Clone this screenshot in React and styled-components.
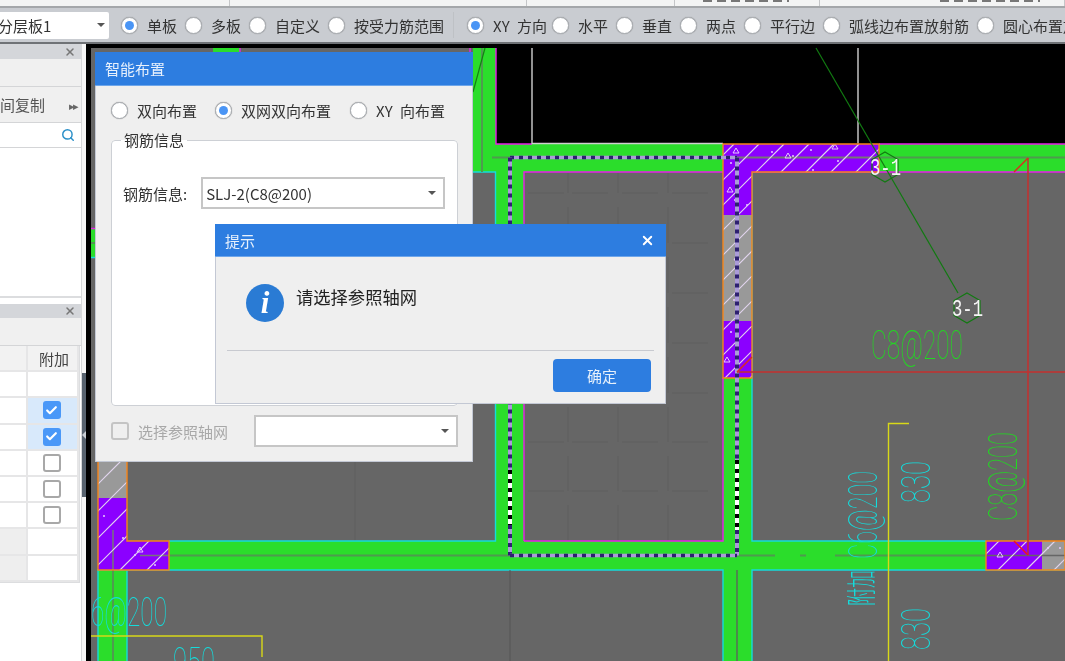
import React from 'react';
import styled, { createGlobalStyle } from 'styled-components';
import { Search, X, Check } from 'lucide-react';

const cjk = '"Noto Sans CJK SC", "Liberation Sans", sans-serif';
const BLUE = '#2d7de0';

const Global = createGlobalStyle`
  html, body { margin: 0; padding: 0; background: #fff; }
  * { box-sizing: border-box; }
`;

const Page = styled.div`
  position: relative; width: 1065px; height: 661px; overflow: hidden;
  display: flex; flex-direction: column;
  font-family: ${cjk}; font-size: 15px; color: #333; background: #fff;
  filter: blur(0.4px);
`;

const Strip = styled.div`
  height: 8px; flex: none; display: flex; background: #f3f4f4;
  border-bottom: 2px solid #a4a7aa;
`;
const StripCell = styled.div`
  width: ${p => p.$w}px; flex: none; overflow: hidden; padding-left: ${p => p.$pad || 0}px;
  border-right: 1px solid #c4c6c8;
`;
const GlyphTrace = styled.div`
  width: ${p => p.$w}px; height: 2px;
  background: repeating-linear-gradient(90deg, #777 0 9px, transparent 9px 14px);
`;

const Toolbar = styled.div`
  height: 36px; flex: none; display: flex; align-items: center; overflow: hidden;
  background: #c9ccd1; border-bottom: 2px solid #6f7276; white-space: nowrap; word-spacing: 4px;
`;
const LayerSelect = styled.div`
  width: 109px; height: 27px; flex: none; margin-right: 12px; background: #fff;
  display: flex; align-items: center; justify-content: space-between;
  padding-right: 4px; font-size: 15px; border-radius: 0 2px 2px 0;
  & > span:first-child { margin-left: -2px; }
`;
const Caret = styled.span`
  width: 0; height: 0; flex: none;
  border-left: 4px solid transparent; border-right: 4px solid transparent; border-top: 4px solid #555;
`;
const RadioItem = styled.label`
  display: inline-flex; align-items: center; gap: 9px; flex: none; margin-right: ${p => p.$gap ?? 8}px;
  color: #333;
`;
const RadioDot = styled.span`
  width: 17px; height: 17px; flex: none; border-radius: 50%; background: #fff;
  border: 1px solid #a9adb2; display: inline-flex; align-items: center; justify-content: center;
  box-shadow: 0 0 1px #888;
  &::after { content: ''; width: 9px; height: 9px; border-radius: 50%; background: ${p => p.$on ? '#4a95f5' : 'transparent'}; }
`;
const ToolSep = styled.span`
  width: 1px; height: 26px; flex: none; background: #bec1c5; margin: 0 13px 0 1px;
`;

const Main = styled.div`flex: 1; min-height: 0; display: flex;`;
const Sidebar = styled.div`
  width: 82px; flex: none; display: flex; flex-direction: column; background: #fff;
  border-right: 1px solid #d6d7d9;
`;
const PanelHeader = styled.div`
  height: ${p => p.$h}px; flex: none; background: #d4d6da; display: flex; align-items: center;
  justify-content: flex-end; padding-right: 5px; color: #777;
`;
const PanelBand = styled.div`
  height: ${p => p.$h}px; flex: none; background: #f0f0f0; border-bottom: 1px solid #d4d5d7;
  display: flex; align-items: center; justify-content: space-between; overflow: hidden; white-space: nowrap;
  padding-right: 2px; color: #555;
`;
const TinyArrows = styled.span`font-size: 11px; letter-spacing: -2px; color: #666; padding-right: 2px;`;
const SearchRow = styled.div`
  height: 25px; flex: none; display: flex; align-items: center; justify-content: flex-end;
  padding-right: 6px; border-bottom: 1px solid #d4d5d7; color: #2a8fc8;
`;
const ListArea = styled.div`
  height: 150px; flex: none; border-bottom: 2px solid #dcdddf; margin-bottom: 6px;
`;
const Table = styled.div`
  display: grid; grid-template-columns: 28px 51px; grid-auto-rows: 26.2px; width: 80px;
  border-right: 1px solid #dcdddf; border-bottom: 1px solid #dcdddf;
`;
const Cell = styled.div`
  display: flex; align-items: center; justify-content: center;
  border-bottom: 2px solid #e6e6e7; border-right: 2px solid #e6e6e7;
  background: ${p => p.$bg || '#fff'}; color: #444;
`;
const HeadCell = styled(Cell)`background: #f2f2f2; padding-left: 3px;`;
const CheckBox = styled.span`
  width: 18px; height: 18px; flex: none; border-radius: 3px; margin-right: 2px;
  display: inline-flex; align-items: center; justify-content: center; color: #fff;
  background: ${p => p.$on ? '#4a98f8' : 'transparent'};
  border: ${p => p.$on ? 'none' : `2px solid ${p.$light ? '#c4c4c4' : '#a8a8a8'}`};
`;

const SplitCol = styled.div`width: 4px; flex: none; background: #f6f6f6; padding-top: 329px;`;
const SplitHandle = styled.div`
  width: 100%; height: 124px; background: #58636f; display: flex; align-items: center; justify-content: center;
  &::after { content: ''; border-right: 4px solid #c9ced4; border-top: 4px solid transparent; border-bottom: 4px solid transparent; }
`;
const Canvas = styled.div`flex: 1; min-width: 0; background: #000; & > svg { display: block; }`;

const Dialog = styled.div`
  position: absolute; left: ${p => p.$x}px; top: ${p => p.$y}px; width: ${p => p.$w}px; height: ${p => p.$h}px;
  background: #efefef; border: 1px solid #c3c8d4; border-top: none;
  display: flex; flex-direction: column;
`;
const TitleBar = styled.div`
  height: ${p => p.$h}px; flex: none; margin: 0 -1px; background: ${BLUE}; color: #e8f1fc;
  display: flex; align-items: center; justify-content: space-between; padding: 0 11px 0 10px;
  border-bottom: 1px solid #6ea6ea;
`;
const SmartBody = styled.div`flex: 1; display: flex; flex-direction: column; padding: 14px 14px 0 15px;`;
const RadioLine = styled.div`display: flex; align-items: center; height: 20px; color: #333; margin-bottom: 10px; word-spacing: 4px;`;
const Group = styled.fieldset`
  margin: 0; padding: 27px 12px 0 11px; width: 347px; height: 276px; background: #fff;
  border: 1px solid #cdd0d5; border-radius: 4px; min-width: 0;
`;
const GroupTitle = styled.legend`padding: 0 3px; margin-left: -2px; line-height: 20px; font-size: 15px; color: #333;`;
const FieldRow = styled.div`display: flex; align-items: center; gap: 14px; color: #333; white-space: nowrap;`;
const Combo = styled.div`
  width: ${p => p.$w}px; height: 32px; flex: none; background: #fff; border: 2px solid #c6c6c6;
  display: flex; align-items: center; justify-content: space-between; padding: 0 7px 0 3px; color: #333;
`;
const BottomRow = styled.div`display: flex; align-items: center; margin-top: 9px;`;
const MutedLabel = styled.span`color: #a8a8a8; margin-left: 7px; margin-right: 26px;`;

const PromptBody = styled.div`
  height: 93px; flex: none; display: flex; align-items: flex-start; gap: 12px; padding: 27px 0 0 30px;
  font-size: 17.3px; line-height: 26px; color: #222;
`;
const InfoIcon = styled.span`
  width: 38px; height: 38px; flex: none; border-radius: 50%; background: #2a7bd4; color: #fff;
  display: flex; align-items: center; justify-content: center;
  font: italic 700 31px/38px "Liberation Serif", serif;
`;
const PromptRule = styled.div`height: 1px; flex: none; margin: 0 11px; background: #c8cad0;`;
const PromptFoot = styled.div`flex: 1; display: flex; justify-content: flex-end; padding: 8px 14px 0 0;`;
const OkButton = styled.button`
  width: 98px; height: 33px; border: none; border-radius: 4px; background: ${BLUE}; color: #e6f0fb;
  font: 15px ${cjk};
`;

const G = '#2bdd2b', GD = '#4f9a4f', P = '#e81fe8', C = '#14dcdc', O = '#f5851a', V = '#8b00ff', GR = '#666';

const hexPts = (cx, cy, r) => [0, 1, 2, 3, 4, 5].map(i => {
  const a = Math.PI / 3 * i - Math.PI / 2;
  return `${cx + r * Math.cos(a)},${cy + r * Math.sin(a)}`;
}).join(' ');

const range = (a, b, s) => { const o = []; for (let i = a; i <= b; i += s) o.push(i); return o; };

const Thin = ({ x, y, w, size, fill, rot, children }) => (
  <text x={x} y={y} fontFamily='Roboto, "Liberation Sans", sans-serif' fontWeight="100" fontSize={size} fill={fill}
    textLength={w} lengthAdjust="spacingAndGlyphs" transform={rot ? `rotate(-90 ${x} ${y})` : undefined}>{children}</text>
);

const Dashes = ({ d, hi, w = 4 }) => (
  <g fill="none">
    <path d={d} stroke={hi ? '#fff' : '#ab9cd8'} strokeWidth={w} />
    <path d={d} stroke={hi ? '#000' : '#2d2070'} strokeWidth={w} strokeDasharray="4 5" />
  </g>
);

const Specks = ({ pts }) => (
  <g fill="#e7c8ff">
    {pts.map(([x, y], i) => i % 3 === 0
      ? <path key={i} d={`M${x} ${y - 3}l3 5h-6z`} fill="none" stroke="#e7c8ff" strokeWidth="1" />
      : <circle key={i} cx={x} cy={y} r="1" />)}
  </g>
);

const Drawing = () => {
  const roomV = [568, 618, 668];
  const roomH = [193, 243, 293, 343, 393, 442, 491];
  return (
    <svg width="979" height="617" viewBox="86 44 979 617">
      <defs>
        <clipPath id="topShape"><path d="M723 144H879V172H752V378H723Z" /></clipPath>
        <clipPath id="leftShape"><path d="M98 461H127V541H169V570H98Z" /></clipPath>
        <clipPath id="rightShape"><rect x="986" y="541" width="79" height="29" /></clipPath>
      </defs>
      <rect x="86" y="44" width="979" height="617" fill="#000" />
      <rect x="91" y="48" width="974" height="613" fill={GR} />

      {/* slabs and beams */}
      <rect x="496" y="48" width="569" height="96" fill="#000" />
      <rect x="473" y="48" width="23" height="124" fill={G} />
      <rect x="473" y="144" width="592" height="28" fill={G} />
      <rect x="496" y="172" width="28" height="398" fill={G} />
      <rect x="723" y="172" width="29" height="489" fill={G} />
      <rect x="127" y="541" width="938" height="29" fill={G} />
      <rect x="98" y="570" width="29" height="91" fill={G} />
      <rect x="91" y="229" width="4" height="28" fill={G} />
      <rect x="213" y="48" width="27" height="4" fill={G} />

      {/* room grid */}
      <g stroke="#5f5f5f" strokeWidth="1">
        {roomV.map(x => roomH.concat(541).map((y, i) => (
          <line key={`${x}-${y}`} x1={x} x2={x} y1={i === 0 ? 173 : roomH[i - 1] + 14} y2={y} />
        )))}
        {roomH.map(y => [528, 572, 622, 672].map(x => (
          <line key={`${x}h${y}`} x1={x} x2={x + 36} y1={y} y2={y} />
        )))}
        <line x1="355" x2="355" y1="461" y2="541" />
      </g>

      {/* outlines */}
      <g fill="none" strokeWidth="1.4">
        <path d="M496 48V144H532M879 144H1065M524 541V172H723M752 172H1065M723 378V541H524M91 228.5H95" stroke={P} />
        <path d="M240 48V52M470 48V52" stroke={P} />
        <path d="M473 172H495.5V541H169M127 570H98V661M127 570V661M91 257.5H95M752 172V541H986M752 661V570H1065M723 661V570H127" stroke={C} />
      </g>
      <g fill="none" stroke="#cfcfcf" strokeWidth="1.4">
        <path d="M532 48V143.5H723M858 48V143.5" />
      </g>

      {/* axis lines */}
      <g fill="none" stroke={GD} strokeWidth="2">
        <path d="M482 48V172M492 157.5H510M879 157.5H1065M91 243H95M169 555.5H510M737 555.5H775M800 555.5H806M835 555.5H986M113 570V661" />
        <path d="M737 570V661" stroke="#4c8a4c" />
      </g>
      <path d="M510 570V661" stroke="#555" strokeWidth="1" />
      <path d="M485 48L473 92" stroke="#137f13" strokeWidth="1.2" fill="none" />

      {/* hatched zones */}
      <g clipPath="url(#topShape)">
        <rect x="723" y="144" width="156" height="234" fill={V} />
        <rect x="723" y="215" width="29" height="106" fill="#999" />
        <path d="M723 157.5H879" stroke="#777" strokeWidth="2" />
        {range(853, 1200, 25).map(c => (
          <line key={c} x1={c - 144} y1="144" x2={c - 400} y2="400" stroke="#e2d5ee" strokeWidth="1.2" />
        ))}
      </g>
      <g clipPath="url(#leftShape)">
        <rect x="98" y="461" width="71" height="109" fill={V} />
        <rect x="98" y="461" width="29" height="37" fill="#999" />
        <path d="M113 530V570M140 555.5H169" stroke="#777" strokeWidth="1.5" />
        {range(555, 760, 27).map(c => (
          <line key={c} x1={c - 440} y1="440" x2={c - 600} y2="600" stroke="#e2d5ee" strokeWidth="1.2" />
        ))}
      </g>
      <g clipPath="url(#rightShape)">
        <rect x="986" y="541" width="56" height="29" fill={V} />
        <rect x="1042" y="541" width="23" height="29" fill="#999" />
        <path d="M986 555.5H1065" stroke="#666" strokeWidth="1.5" />
        {range(1540, 1660, 28).map(c => (
          <line key={c} x1={c - 530} y1="530" x2={c - 580} y2="580" stroke="#e2d5ee" strokeWidth="1.2" />
        ))}
      </g>
      <Specks pts={[[736, 151], [731, 163], [772, 152], [788, 156], [793, 156], [811, 150], [835, 147], [838, 161], [813, 170], [730, 190], [735, 200], [747, 205], [737, 258], [734, 300], [731, 332], [727, 360], [104, 516], [123, 538], [140, 550], [155, 565], [135, 555], [1000, 555], [1048, 548], [1060, 548]]} />
      <path d="M723 144H879V172H752V378H723Z M98 461H127V541H169V570H98Z M986 541H1065V570H986Z" fill="none" stroke={O} strokeWidth="1.4" />

      {/* dashed rebar */}
      <Dashes w={3.5} d="M510 157.5H737" />
      <Dashes d="M510 157.5V470M510 525V555.5M737 157.5V460M737 530V555.5" />
      <Dashes w={3.5} d="M510 555.5H737" />
      <Dashes d="M510 470V525M737 460V530" hi />

      {/* red leader */}
      <g fill="none" stroke="#c4302f" strokeWidth="1.5">
        <path d="M737 372H1065M1028 158V555" />
        <path d="M1014 172L1028 158M737 372L752 357" stroke="#d8301f" />
        <path d="M1014 541L1028 555" stroke="#f01818" />
      </g>

      {/* yellow dimension */}
      <g fill="none" stroke="#d8d818" strokeWidth="1.4">
        <path d="M909 423.5H888.5V661" />
        <path d="M91 636H262V657" />
      </g>

      {/* leader and labels */}
      <g fill="none" stroke="#117a11" strokeWidth="1.2">
        <path d="M816 48L958 293" />
        <polygon points={hexPts(885, 167, 15)} />
        <polygon points={hexPts(967, 308, 15)} />
      </g>
      <Thin x="871" y="359" w="92" size="40" fill="#22d822">C8@200</Thin>
      <Thin x="1017" y="521" w="89" size="40" fill="#22d822" rot>C8@200</Thin>
      <Thin x="877" y="559" w="88" size="40" fill={C} rot>C6@200</Thin>
      <Thin x="930" y="503" w="42" size="40" fill={C} rot>830</Thin>
      <Thin x="930" y="650" w="42" size="40" fill={C} rot>830</Thin>
      <Thin x="91" y="626" w="76" size="40" fill={C}>6@200</Thin>
      <Thin x="173" y="676" w="42" size="40" fill={C}>950</Thin>
      <text x="0" y="0" transform="translate(872 606) rotate(-90)" fontFamily={cjk} fontWeight="300" fontSize="30" fill={C} textLength="36" lengthAdjust="spacingAndGlyphs">附加</text>
      <g fontFamily='"Liberation Mono", monospace' fill="#f4f4f4" fontSize="23">
        <text x="870" y="175" textLength="31" lengthAdjust="spacingAndGlyphs">3-1</text>
        <text x="952" y="316" textLength="31" lengthAdjust="spacingAndGlyphs">3-1</text>
      </g>
    </svg>
  );
};

const tools1 = [['单板', true], ['多板'], ['自定义'], ['按受力筋范围']];
const tools2 = [['XY 方向', true, 5], ['水平'], ['垂直'], ['两点'], ['平行边'], ['弧线边布置放射筋'], ['圆心布置放射筋']];
const rows = [
  {}, { on: true, box: true }, { on: true, box: true }, { box: true }, { box: true }, { box: true },
  { grey: true }, { grey: true },
];

export default function App() {
  return (
    <Page>
      <Global />
      <Strip>
        <StripCell $w={230} />
        <StripCell $w={297} />
        <StripCell $w={148} />
        <StripCell $w={145} $pad={28}><GlyphTrace $w={86} /></StripCell>
        <StripCell $w={245} $pad={120}><GlyphTrace $w={100} /></StripCell>
      </Strip>
      <Toolbar>
        <LayerSelect><span>分层板1</span><Caret /></LayerSelect>
        {tools1.map(([t, on]) => <RadioItem key={t}><RadioDot $on={on} />{t}</RadioItem>)}
        <ToolSep />
        {tools2.map(([t, on, gap]) => <RadioItem key={t} $gap={gap}><RadioDot $on={on} />{t}</RadioItem>)}
      </Toolbar>
      <Main>
        <Sidebar>
          <PanelHeader $h={15}><X size={12} strokeWidth={3} /></PanelHeader>
          <PanelBand $h={28} />
          <PanelBand $h={36}><span>间复制</span><TinyArrows>▸▸</TinyArrows></PanelBand>
          <SearchRow><Search size={14} strokeWidth={2.5} /></SearchRow>
          <ListArea />
          <PanelHeader $h={14}><X size={12} strokeWidth={3} /></PanelHeader>
          <PanelBand $h={28} />
          <Table>
            <HeadCell />
            <HeadCell>附加</HeadCell>
            {rows.map((r, i) => (
              <React.Fragment key={i}>
                <Cell $bg={r.grey ? '#eeeeee' : '#fff'} />
                <Cell $bg={r.on ? '#d8e9fb' : '#fff'}>
                  {r.box && <CheckBox $on={r.on}>{r.on && <Check size={13} strokeWidth={4} />}</CheckBox>}
                </Cell>
              </React.Fragment>
            ))}
          </Table>
        </Sidebar>
        <SplitCol><SplitHandle /></SplitCol>
        <Canvas><Drawing /></Canvas>
      </Main>

      <Dialog $x={95} $y={52} $w={378} $h={410}>
        <TitleBar $h={34}>智能布置</TitleBar>
        <SmartBody>
          <RadioLine>
            <RadioItem $gap={18}><RadioDot />双向布置</RadioItem>
            <RadioItem $gap={19}><RadioDot $on />双网双向布置</RadioItem>
            <RadioItem><RadioDot />XY 向布置</RadioItem>
          </RadioLine>
          <Group>
            <GroupTitle>钢筋信息</GroupTitle>
            <FieldRow>钢筋信息:<Combo $w={244}>SLJ-2(C8@200)<Caret /></Combo></FieldRow>
          </Group>
          <BottomRow>
            <CheckBox $light />
            <MutedLabel>选择参照轴网</MutedLabel>
            <Combo $w={204}><span /><Caret /></Combo>
          </BottomRow>
        </SmartBody>
      </Dialog>

      <Dialog $x={215} $y={224} $w={451} $h={180}>
        <TitleBar $h={33}>提示<X size={15} strokeWidth={3} color="#fff" /></TitleBar>
        <PromptBody><InfoIcon>i</InfoIcon>请选择参照轴网</PromptBody>
        <PromptRule />
        <PromptFoot><OkButton>确定</OkButton></PromptFoot>
      </Dialog>
    </Page>
  );
}
